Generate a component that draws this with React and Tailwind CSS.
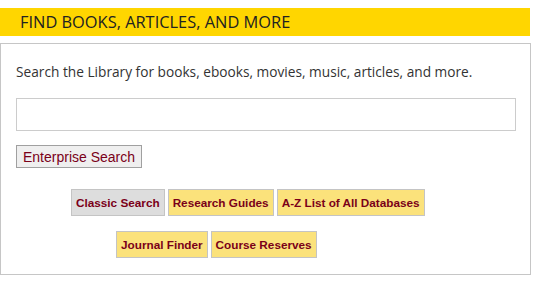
export default function App() {
  const row1 = [
    { label: 'Classic Search', gray: true },
    { label: 'Research Guides' },
    { label: 'A-Z List of All Databases' },
  ];
  const row2 = [{ label: 'Journal Finder' }, { label: 'Course Reserves' }];

  const btn = (item) => (
    <a
      key={item.label}
      href="#"
      className={`h-[27px] px-[4px] flex items-center border border-[#c4c4c4] text-[11.75px] font-bold text-[#7a0019] ${
        item.gray ? 'bg-[#dddddd]' : 'bg-[#fbe27b]'
      }`}
      style={{ fontFamily: '"Liberation Sans", Arial, sans-serif' }}
    >
      {item.label}
    </a>
  );

  return (
    <div className="w-[533px] h-[294px] bg-white pt-[8px]" style={{ fontFamily: '"Open Sans", sans-serif' }}>
      {/* header bar */}
      <div className="w-[530px] h-[28px] bg-[#ffd600] flex items-center pl-[20px]">
        <h2 className="text-[16.4px] text-[#222] uppercase leading-none">Find Books, Articles, and More</h2>
      </div>

      {/* search box */}
      <div className="mt-[7px] w-[531px] h-[232px] border border-[#c6c6c6] px-[15px] pt-[18px]">
        <p className="text-[13.7px] text-[#333] leading-[20px]">
          Search the Library for books, ebooks, movies, music, articles, and more.
        </p>
        <input
          type="text"
          className="mt-[16px] w-[500px] h-[33px] border border-[#cccccc] outline-none"
        />
        <button
          className="mt-[14px] block h-[23px] px-[6px] border border-[#a0a0a0] bg-[#efefef] text-[14px] text-[#7a0019] leading-none"
          style={{ fontFamily: '"Liberation Sans", Arial, sans-serif' }}
        >
          Enterprise Search
        </button>

        <div className="mt-[21px] flex gap-[3px] pl-[55px]">{row1.map(btn)}</div>
        <div className="mt-[15px] flex gap-[3px] pl-[100px]">{row2.map(btn)}</div>
      </div>
    </div>
  );
}
